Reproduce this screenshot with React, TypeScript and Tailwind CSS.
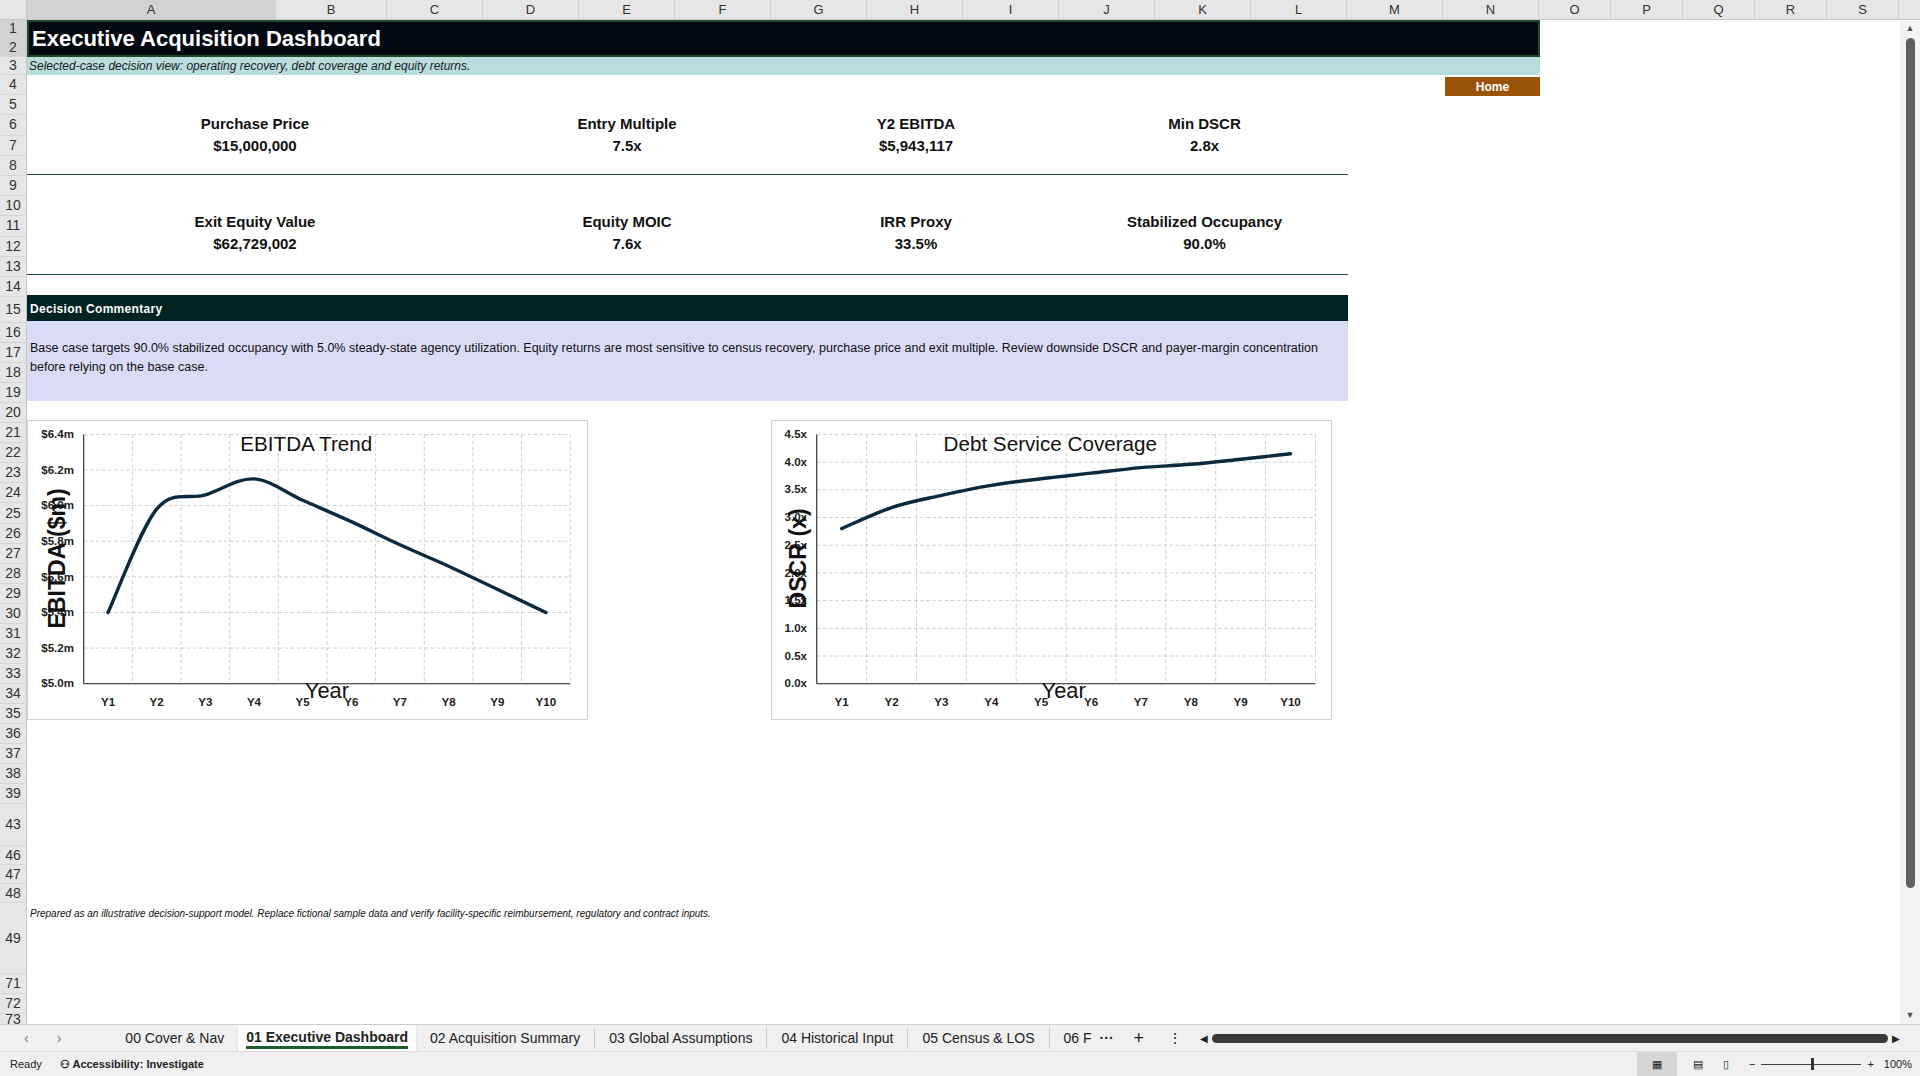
import React from 'react';

const cols: [string, number][] = [
  ['A', 249], ['B', 111], ['C', 96], ['D', 96], ['E', 96], ['F', 96], ['G', 96], ['H', 96],
  ['I', 96], ['J', 96], ['K', 96], ['L', 96], ['M', 96], ['N', 96],
  ['O', 72], ['P', 72], ['Q', 72], ['R', 72], ['S', 72],
];

const rows: [string, number][] = [
  ['1', 18], ['2', 19], ['3', 18],
  ...['4', '5', '6', '7', '8', '9', '10', '11', '12', '13', '14'].map((r) => [r, 20.2] as [string, number]),
  ['15', 26],
  ...Array.from({ length: 24 }, (_, i) => [String(16 + i), 20.05] as [string, number]),
  ['43', 42], ['46', 19], ['47', 19], ['48', 19], ['49', 71], ['71', 20], ['72', 20], ['73', 11],
];

const kpiTop = [
  ['Purchase Price', '$15,000,000'],
  ['Entry Multiple', '7.5x'],
  ['Y2 EBITDA', '$5,943,117'],
  ['Min DSCR', '2.8x'],
];
const kpiBottom = [
  ['Exit Equity Value', '$62,729,002'],
  ['Equity MOIC', '7.6x'],
  ['IRR Proxy', '33.5%'],
  ['Stabilized Occupancy', '90.0%'],
];

function smooth(pts: [number, number][]) {
  let d = `M${pts[0][0]},${pts[0][1]}`;
  for (let i = 0; i < pts.length - 1; i++) {
    const p0 = pts[i - 1] || pts[i];
    const p1 = pts[i];
    const p2 = pts[i + 1];
    const p3 = pts[i + 2] || p2;
    const c1x = p1[0] + (p2[0] - p0[0]) / 6;
    const c1y = p1[1] + (p2[1] - p0[1]) / 6;
    const c2x = p2[0] - (p3[0] - p1[0]) / 6;
    const c2y = p2[1] - (p3[1] - p1[1]) / 6;
    d += ` C${c1x},${c1y} ${c2x},${c2y} ${p2[0]},${p2[1]}`;
  }
  return d;
}

interface ChartProps {
  title: string;
  axis: string;
  left: number;
  right: number;
  min: number;
  max: number;
  step: number;
  fmt: (v: number) => string;
  data: number[];
  titleX: number;
  yearX: number;
  axisX: number;
}

const Chart: React.FC<ChartProps> = ({ title, axis, left, right, min, max, step, fmt, data, titleX, yearX, axisX }) => {
  const top = 11;
  const bottom = 216;
  const n = Math.round((max - min) / step);
  const w = (right - left) / 10;
  const y = (v: number) => bottom - ((v - min) / (max - min)) * (bottom - top);
  const pts = data.map((v, i) => [left + w * (i + 0.5), y(v)] as [number, number]);
  return (
    <div className="w-[561px] h-[300px] border border-[#d0d0d0] bg-white shrink-0">
      <svg viewBox="0 0 458 245" width={559} height={298} style={{ fontFamily: '"Liberation Sans", Arial, sans-serif' }}>
        {Array.from({ length: n }, (_, i) => (
          <line key={'h' + i} x1={left} x2={right} y1={top + ((bottom - top) / n) * i} y2={top + ((bottom - top) / n) * i} stroke="#bdbdbd" strokeWidth={0.6} strokeDasharray="3 2" />
        ))}
        {Array.from({ length: 10 }, (_, i) => (
          <line key={'v' + i} x1={left + w * (i + 1)} x2={left + w * (i + 1)} y1={top} y2={bottom} stroke="#bdbdbd" strokeWidth={0.6} strokeDasharray="3 2" />
        ))}
        <line x1={left} x2={left} y1={top} y2={bottom} stroke="#222" strokeWidth={0.9} />
        <line x1={left} x2={right} y1={bottom} y2={bottom} stroke="#222" strokeWidth={0.9} />
        {Array.from({ length: n + 1 }, (_, i) => (
          <text key={'t' + i} x={left - 8} y={bottom - ((bottom - top) / n) * i + 3} fontSize={9.5} fontWeight="bold" textAnchor="end" fill="#222">
            {fmt(min + step * i)}
          </text>
        ))}
        {data.map((_, i) => (
          <text key={'x' + i} x={left + w * (i + 0.5)} y={234} fontSize={9.5} fontWeight="bold" textAnchor="middle" fill="#222">
            Y{i + 1}
          </text>
        ))}
        <path d={smooth(pts)} fill="none" stroke="#0b2a3f" strokeWidth={2.8} strokeLinecap="round" />
        <text x={titleX} y={25} fontSize={17} textAnchor="middle" fill="#111">{title}</text>
        <text x={yearX} y={228} fontSize={18} textAnchor="middle" fill="#111">Year</text>
        <text x={axisX} y={113} fontSize={19} fontWeight="bold" textAnchor="middle" fill="#111" transform={`rotate(-90 ${axisX} 113)`}>{axis}</text>
      </svg>
    </div>
  );
};

const Kpis: React.FC<{ items: string[][]; pt: string; h: string }> = ({ items, pt, h }) => (
  <div className={`grid grid-cols-[456px_288px_290px_287px] w-[1321px] ${h} ${pt} border-b border-[#1f4f55]`}>
    {items.map(([l, v]) => (
      <div key={l} className="flex flex-col items-center text-[15px] font-bold text-[#111]">
        <span className="leading-[18px]">{l}</span>
        <span className="leading-[22px] mt-[2px]">{v}</span>
      </div>
    ))}
  </div>
);

export default function App() {
  return (
    <div className="w-[1920px] h-[1076px] flex flex-col bg-white overflow-hidden" style={{ fontFamily: '"Liberation Sans", Arial, sans-serif' }}>
      <div className="flex h-[20px] bg-[#e6e6e6] border-b border-[#c8c8c8] shrink-0">
        <div className="w-[27px] border-r border-[#c8c8c8]" />
        {cols.map(([c, w]) => (
          <div key={c} style={{ width: w }} className={`shrink-0 flex items-center justify-center text-[13px] text-[#333] border-r border-[#d0d0d0] ${c === 'A' ? 'bg-[#d2d2d2]' : ''}`}>
            {c}
          </div>
        ))}
      </div>
      <div className="flex h-[1004px] shrink-0">
        <div className="w-[27px] flex flex-col bg-[#e6e6e6] border-r border-[#c8c8c8] shrink-0">
          {rows.map(([r, h]) => (
            <div key={r} style={{ height: h }} className={`flex items-center justify-center text-[14px] text-[#333] border-b border-[#d6d6d6] overflow-hidden shrink-0 ${r === '1' || r === '2' ? 'bg-[#d2d2d2]' : ''}`}>
              {r}
            </div>
          ))}
        </div>
        <div className="flex-1 flex flex-col">
          <div className="w-[1513px] h-[37px] bg-[#020910] border-2 border-[#1f4a2a] flex items-center px-[3px] text-white font-bold text-[22px]">
            Executive Acquisition Dashboard
          </div>
          <div className="w-[1513px] h-[18px] bg-[#b9dcdc] flex items-center px-[2px] text-[12px] italic text-[#1a1a1a]">
            Selected-case decision view: operating recovery, debt coverage and equity returns.
          </div>
          <div className="h-[21px] flex items-end">
            <div className="ml-[1418px] w-[95px] h-[19px] bg-[#9a5408] text-white text-[12px] font-bold flex items-center justify-center">Home</div>
          </div>
          <Kpis items={kpiTop} pt="pt-[19px]" h="h-[79px]" />
          <Kpis items={kpiBottom} pt="pt-[38px]" h="h-[100px]" />
          <div className="h-[20px]" />
          <div className="w-[1321px] h-[26px] bg-[#002323] text-white font-bold text-[12px] flex items-end pb-[3px] px-[3px] tracking-wide">
            Decision Commentary
          </div>
          <div className="w-[1321px] h-[80px] bg-[#dadbf7] text-[12.5px] leading-[18.5px] text-[#111] pt-[18px] px-[3px]">
            Base case targets 90.0% stabilized occupancy with 5.0% steady-state agency utilization. Equity returns are most sensitive to census recovery, purchase price and exit multiple. Review downside DSCR and payer-margin concentration
            <br />
            before relying on the base case.
          </div>
          <div className="flex mt-[19px]">
            <Chart
              title="EBITDA Trend" axis="EBITDA ($m)" left={45} right={445} min={5.0} max={6.4} step={0.2}
              fmt={(v) => `$${v.toFixed(1)}m`}
              data={[5.4, 5.98, 6.06, 6.15, 6.03, 5.91, 5.78, 5.66, 5.53, 5.4]}
              titleX={228} yearX={245} axisX={30}
            />
            <div className="w-[183px] shrink-0" />
            <Chart
              title="Debt Service Coverage" axis="DSCR (x)" left={36} right={446} min={0} max={4.5} step={0.5}
              fmt={(v) => `${v.toFixed(1)}x`}
              data={[2.8, 3.18, 3.4, 3.58, 3.7, 3.8, 3.9, 3.96, 4.05, 4.15]}
              titleX={228} yearX={239} axisX={27}
            />
          </div>
          <div className="mt-[186px] text-[10px] italic text-[#111] px-[3px]">
            Prepared as an illustrative decision-support model. Replace fictional sample data and verify facility-specific reimbursement, regulatory and contract inputs.
          </div>
        </div>
        <div className="w-[20px] bg-[#f3f3f3] flex flex-col items-center shrink-0">
          <span className="text-[9px] text-[#555] mt-[2px]">▲</span>
          <div className="w-[9px] h-[850px] bg-[#5f5f5f] rounded-full mt-[2px]" />
          <div className="flex-1" />
          <span className="text-[9px] text-[#555] mb-[2px]">▼</span>
        </div>
      </div>
      <div className="h-[27px] bg-[#f0f0f0] border-t border-[#d0d0d0] flex items-center text-[14px] text-[#222] shrink-0 whitespace-nowrap">
        <span className="ml-[24px] text-[#777]">‹</span>
        <span className="ml-[28px] text-[#777]">›</span>
        <span className="ml-[50px] px-[14px] shrink-0">00 Cover &amp; Nav</span>
        <span className="h-[27px] bg-white px-[8px] flex flex-col justify-center font-semibold shadow-sm shrink-0">
          <span className="border-b-[3px] border-[#1d5b2b] leading-[18px]">01 Executive Dashboard</span>
        </span>
        <span className="px-[14px] border-r border-[#ccc] shrink-0">02 Acquisition Summary</span>
        <span className="px-[14px] border-r border-[#ccc] shrink-0">03 Global Assumptions</span>
        <span className="px-[14px] border-r border-[#ccc] shrink-0">04 Historical Input</span>
        <span className="px-[14px] border-r border-[#ccc] shrink-0">05 Census &amp; LOS</span>
        <span className="pl-[14px] shrink-0">06 F</span>
        <span className="ml-[8px] font-bold">···</span>
        <span className="ml-[20px] text-[18px]">+</span>
        <span className="ml-[24px]">⋮</span>
        <span className="ml-[18px] text-[10px]">◀</span>
        <div className="ml-[4px] flex-1 h-[9px] bg-[#3a3a3a] rounded-full" />
        <span className="ml-[4px] mr-[20px] text-[10px]">▶</span>
      </div>
      <div className="h-[25px] bg-[#f0f0f0] border-t border-[#dcdcdc] flex items-center text-[11px] text-[#222] shrink-0 whitespace-nowrap">
        <span className="ml-[10px]">Ready</span>
        <span className="ml-[18px] font-semibold">⚇ Accessibility: Investigate</span>
        <div className="flex-1" />
        <div className="w-[40px] h-[25px] bg-[#d6d6d6] flex items-center justify-center">▦</div>
        <span className="ml-[16px]">▤</span>
        <span className="ml-[20px]">▯</span>
        <span className="ml-[20px]">−</span>
        <div className="ml-[6px] w-[100px] h-[1px] bg-[#444] relative">
          <div className="absolute left-[50px] top-[-6px] w-[3px] h-[12px] bg-[#333]" />
        </div>
        <span className="ml-[6px]">+</span>
        <span className="ml-[10px] mr-[8px]">100%</span>
      </div>
    </div>
  );
}
